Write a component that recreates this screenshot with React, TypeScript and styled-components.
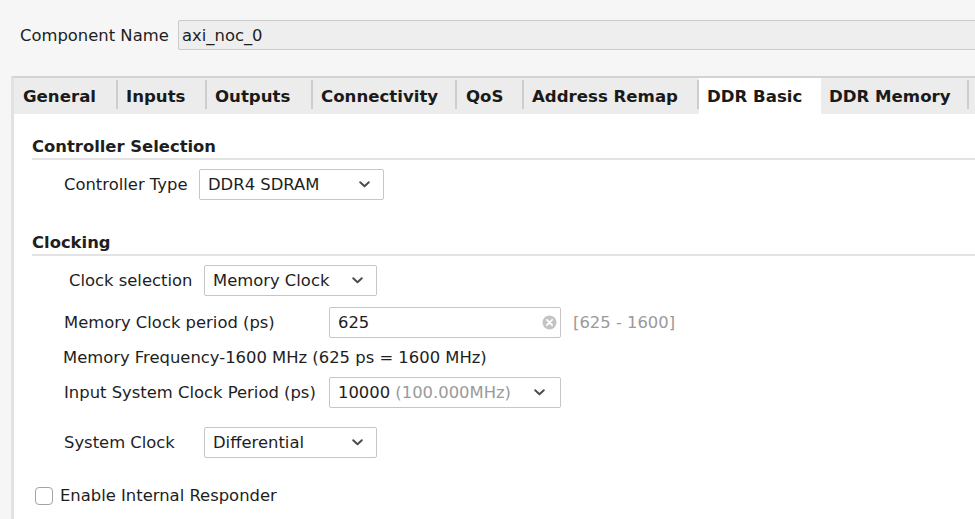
import React from "react";
import styled, { createGlobalStyle } from "styled-components";

const GlobalStyle = createGlobalStyle`
  html, body {
    margin: 0;
    padding: 0;
    background: #f6f6f6;
    overflow: hidden;
  }
  body {
    font-family: "DejaVu Sans", "Noto Sans", sans-serif;
    font-size: 16.4px;
    color: #1e1e1e;
  }
`;

const Page = styled.div`
  width: 975px;
  height: 519px;
  padding-top: 20px;
  box-sizing: border-box;
  overflow: hidden;
`;

const NameRow = styled.div`
  display: flex;
  align-items: center;
  height: 30px;
  padding-left: 20px;
`;

const NameLabel = styled.span`
  width: 158px;
  line-height: 20px;
  padding-top: 1px;
`;

const NameInput = styled.div`
  flex: 1;
  height: 30px;
  box-sizing: border-box;
  margin-right: -20px;
  border: 1px solid #cbcbcb;
  border-radius: 2px;
  background: #eeeeee;
  display: flex;
  align-items: center;
  padding: 1px 0 0 3px;
`;

const Frame = styled.div`
  margin-top: 26px;
  margin-left: 11px;
  border-left: 3px solid #e2e2e2;
  border-top: 2px solid #d3d3d3;
`;

const TabBar = styled.div`
  display: flex;
  height: 36px;
  background: #ececec;
`;

const Tab = styled.div<{ $w: number; $active?: boolean; $pl?: number }>`
  width: ${(p) => p.$w}px;
  flex: none;
  box-sizing: border-box;
  padding-left: ${(p) => p.$pl ?? 8}px;
  padding-top: 1px;
  display: flex;
  align-items: center;
  font-weight: bold;
  font-size: 16.6px;
  white-space: nowrap;
  background: ${(p) => (p.$active ? "#ffffff" : "transparent")};
  color: #1a1a1a;
`;

const TabSep = styled.div`
  width: 2px;
  height: 29px;
  margin-top: 2px;
  flex: none;
  background: #cdcdcd;
`;

const Panel = styled.div`
  background: #ffffff;
  padding: 23px 0 40px 18px;
  height: 420px;
`;

const SectionHeader = styled.div<{ $mt?: number }>`
  margin-top: ${(p) => p.$mt ?? 0}px;
  font-weight: bold;
  line-height: 20px;
  padding-bottom: 1px;
  border-bottom: 2px solid #e3e3e3;
`;

const FieldRow = styled.div<{ $mt: number; $indent: number }>`
  display: flex;
  align-items: center;
  height: 31px;
  margin-top: ${(p) => p.$mt}px;
  padding-left: ${(p) => p.$indent}px;
`;

const Label = styled.span<{ $w: number }>`
  width: ${(p) => p.$w}px;
  flex: none;
  white-space: nowrap;
  line-height: 20px;
`;

const Select = styled.div<{ $w: number; $pr?: number }>`
  width: ${(p) => p.$w}px;
  height: 31px;
  flex: none;
  box-sizing: border-box;
  border: 1px solid #c6c6c6;
  border-radius: 2px;
  background: #ffffff;
  display: flex;
  align-items: center;
  justify-content: space-between;
  padding: 0 ${(p) => p.$pr ?? 13}px 0 8px;
  white-space: nowrap;
`;

const TextInput = styled(Select)``;

const Muted = styled.span`
  color: #9a9a9a;
`;

const Range = styled.span`
  margin-left: 12px;
  color: #9a9a9a;
  white-space: nowrap;
`;

const InfoLine = styled.div<{ $mt: number; $indent: number }>`
  margin-top: ${(p) => p.$mt}px;
  padding-left: ${(p) => p.$indent}px;
  line-height: 20px;
  white-space: nowrap;
`;

const CheckRow = styled.label<{ $mt: number }>`
  display: flex;
  align-items: center;
  gap: 7px;
  margin-top: ${(p) => p.$mt}px;
  padding-left: 3px;
  height: 20px;
  line-height: 20px;
`;

const CheckBox = styled.span`
  width: 18px;
  height: 18px;
  box-sizing: border-box;
  border: 1.5px solid #a4a4a4;
  border-radius: 4px;
  background: #ffffff;
  flex: none;
`;

const Chevron = () => (
  <svg width="11" height="7" viewBox="0 0 11 7" aria-hidden>
    <polyline
      points="1.2,1.2 5.5,5.3 9.8,1.2"
      fill="none"
      stroke="#4a4a4a"
      strokeWidth="1.9"
      strokeLinecap="round"
      strokeLinejoin="round"
    />
  </svg>
);

const ClearIcon = () => (
  <svg width="15" height="15" viewBox="0 0 15 15" aria-hidden>
    <circle cx="7.5" cy="7.5" r="7" fill="#c4c4c4" />
    <path d="M4.9 4.9 L10.1 10.1 M10.1 4.9 L4.9 10.1" stroke="#ffffff" strokeWidth="1.8" strokeLinecap="round" />
  </svg>
);

const tabs: { name: string; w: number; active?: boolean; sep: boolean; pl?: number }[] = [
  { name: "General", w: 102, sep: true, pl: 9 },
  { name: "Inputs", w: 87, sep: true },
  { name: "Outputs", w: 104, sep: true },
  { name: "Connectivity", w: 142, sep: true },
  { name: "QoS", w: 65, sep: true, pl: 9 },
  { name: "Address Remap", w: 173, sep: true },
  { name: "DDR Basic", w: 122, active: true, sep: false },
  { name: "DDR Memory", w: 146, sep: true },
];

export default function App() {
  return (
    <>
      <GlobalStyle />
      <Page>
        <NameRow>
          <NameLabel>Component Name</NameLabel>
          <NameInput>axi_noc_0</NameInput>
        </NameRow>
        <Frame>
          <TabBar>
            {tabs.map((t) => (
              <React.Fragment key={t.name}>
                <Tab $w={t.w} $active={t.active} $pl={t.pl}>
                  {t.name}
                </Tab>
                {t.sep && <TabSep />}
              </React.Fragment>
            ))}
          </TabBar>
          <Panel>
            <SectionHeader>Controller Selection</SectionHeader>
            <FieldRow $mt={9} $indent={32}>
              <Label $w={135}>Controller Type</Label>
              <Select $w={185}>
                <span>DDR4 SDRAM</span>
                <Chevron />
              </Select>
            </FieldRow>

            <SectionHeader $mt={33}>Clocking</SectionHeader>
            <FieldRow $mt={9} $indent={37}>
              <Label $w={135}>Clock selection</Label>
              <Select $w={173}>
                <span>Memory Clock</span>
                <Chevron />
              </Select>
            </FieldRow>
            <FieldRow $mt={11} $indent={32}>
              <Label $w={265}>Memory Clock period (ps)</Label>
              <TextInput $w={232} $pr={3}>
                <span>625</span>
                <ClearIcon />
              </TextInput>
              <Range>[625 - 1600]</Range>
            </FieldRow>
            <InfoLine $mt={10} $indent={31}>
              Memory Frequency-1600 MHz (625 ps = 1600 MHz)
            </InfoLine>
            <FieldRow $mt={9} $indent={32}>
              <Label $w={265}>Input System Clock Period (ps)</Label>
              <Select $w={232} $pr={15}>
                <span>
                  10000 <Muted>(100.000MHz)</Muted>
                </span>
                <Chevron />
              </Select>
            </FieldRow>
            <FieldRow $mt={19} $indent={32}>
              <Label $w={140}>System Clock</Label>
              <Select $w={173}>
                <span>Differential</span>
                <Chevron />
              </Select>
            </FieldRow>
            <CheckRow $mt={28}>
              <CheckBox />
              <span>Enable Internal Responder</span>
            </CheckRow>
          </Panel>
        </Frame>
      </Page>
    </>
  );
}
